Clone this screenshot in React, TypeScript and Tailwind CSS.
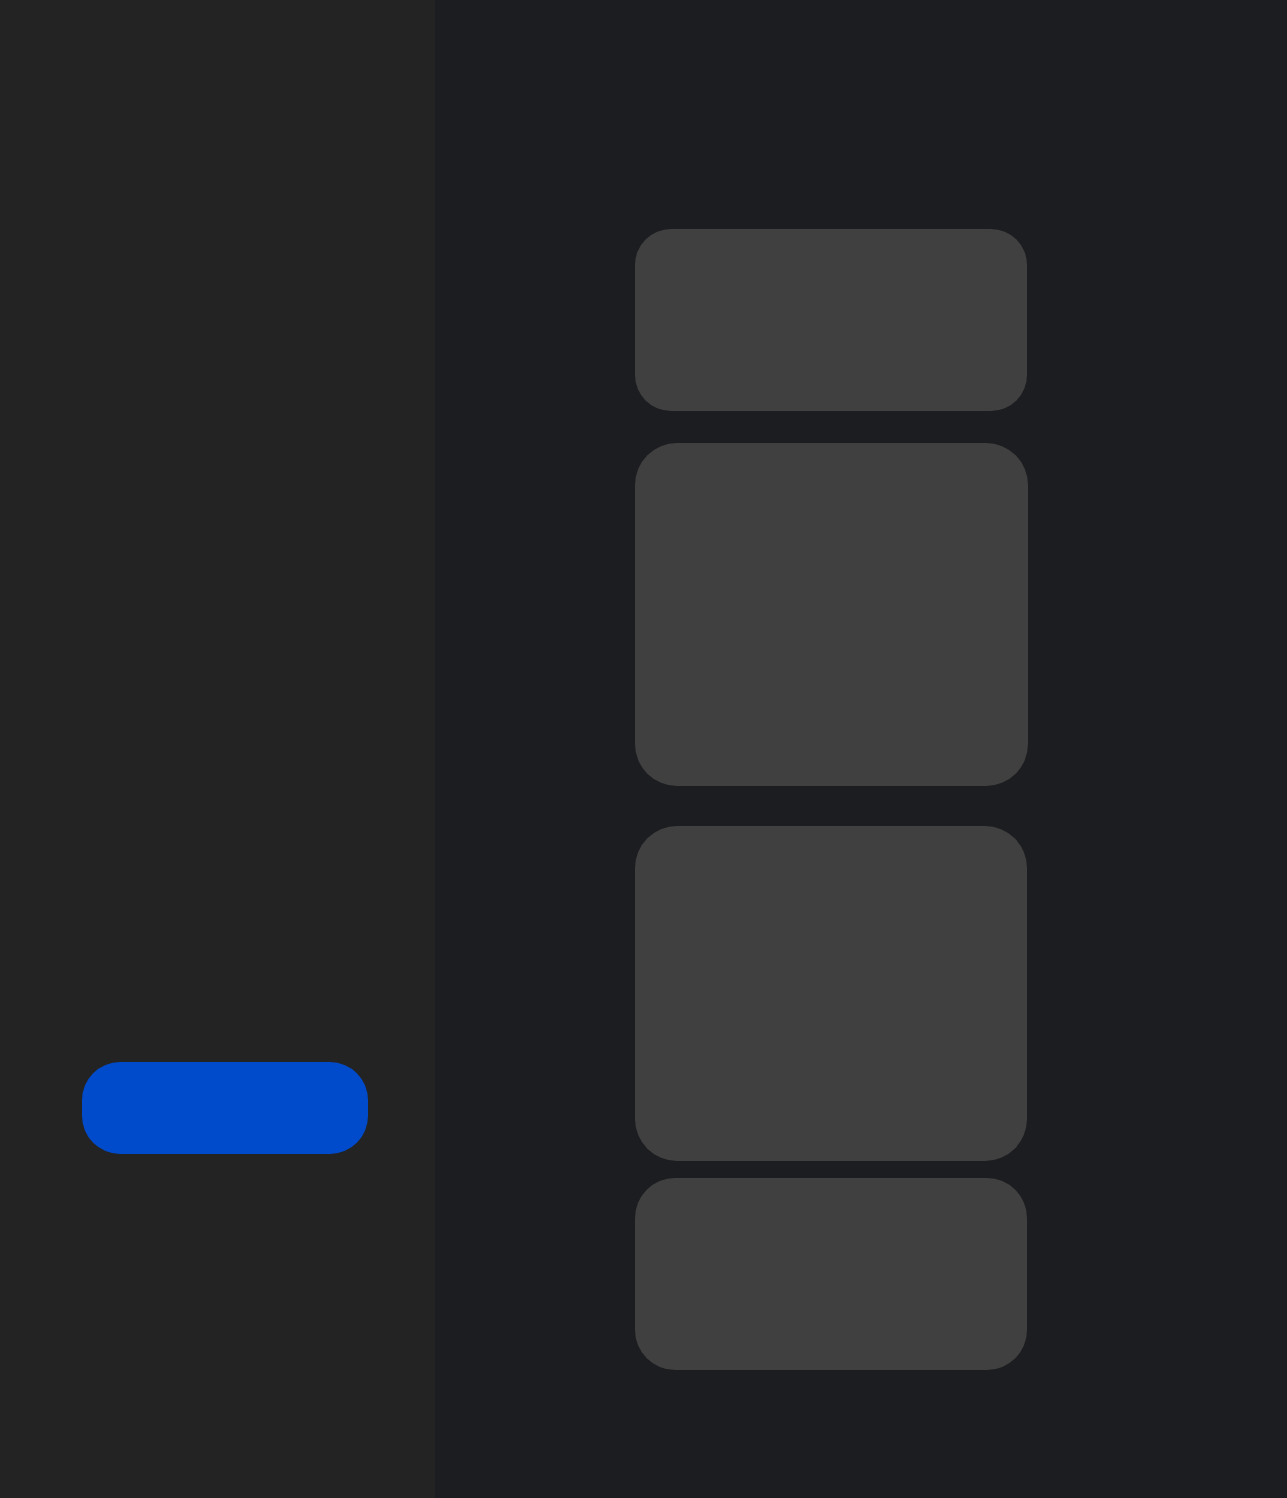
export default function App() {
  return (
    <div className="flex min-h-[1498px] w-full bg-[#1c1d20]">
      <aside className="flex w-[435px] shrink-0 flex-col bg-[#232323] pl-[82px] pt-[1062px]">
        <button className="h-[92px] w-[286px] rounded-[38px] bg-[#004bcb]" aria-label="Action" />
      </aside>
      <main className="flex flex-1 flex-col pl-[200px] pt-[229px]">
        <div className="h-[182px] w-[392px] rounded-[36px] bg-[#404040]" />
        <div className="mt-[32px] h-[343px] w-[393px] rounded-[42px] bg-[#404040]" />
        <div className="mt-[40px] h-[335px] w-[392px] rounded-[42px] bg-[#404040]" />
        <div className="mt-[17px] h-[192px] w-[392px] rounded-[40px] bg-[#404040]" />
      </main>
    </div>
  );
}
